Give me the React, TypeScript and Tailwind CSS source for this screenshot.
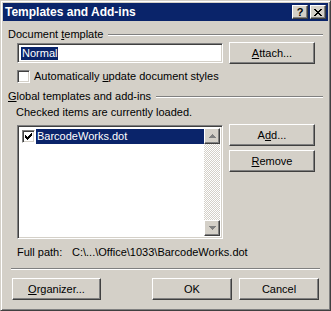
import React from 'react';

const raised =
  'border border-t-white border-l-white border-r-[#404040] border-b-[#404040] shadow-[inset_-1px_-1px_#808080]';
const sunken =
  'border border-t-[#808080] border-l-[#808080] border-r-white border-b-white shadow-[inset_1px_1px_#404040,inset_-1px_-1px_#d4d0c8]';

const Button: React.FC<{ className?: string; children: React.ReactNode }> = ({ className = '', children }) => (
  <div className={`${raised} bg-[#d4d0c8] flex items-center justify-center text-black ${className}`}>{children}</div>
);

const Check: React.FC<{ checked?: boolean }> = ({ checked }) => (
  <div className={`${sunken} w-[13px] h-[13px] bg-white flex items-center justify-center shrink-0`}>
    {checked && (
      <svg width="7" height="7" viewBox="0 0 7 7">
        <path d="M0 2h1v1h1v1h1V3h1V2h1V1h1V0h1v3H6v1H5v1H4v1H3v1H2V6H1V5H0z" fill="#000" />
      </svg>
    )}
  </div>
);

const GroupLabel: React.FC<{ children: React.ReactNode }> = ({ children }) => (
  <div className="flex items-center gap-[5px] h-[13px]">
    <span className="whitespace-nowrap">{children}</span>
    <div className="flex-1 border-t border-t-[#808080] border-b border-b-white" />
  </div>
);

const ScrollArrow: React.FC<{ down?: boolean }> = ({ down }) => (
  <div className={`${raised} w-[16px] h-[16px] bg-[#d4d0c8] flex items-center justify-center`}>
    <svg width="7" height="4" viewBox="0 0 7 4" className={down ? 'rotate-180' : ''}>
      <path d="M3 0h1v1h1v1h1v1h1v1H0V3h1V2h1V1h1z" fill="#808080" />
    </svg>
  </div>
);

export default function App() {
  return (
    <div className="w-[331px] h-[311px] bg-[#d4d0c8] font-['Liberation_Sans',Arial,sans-serif] text-[11px] text-black leading-[13px]">
      <div className="w-full h-full border border-t-[#d4d0c8] border-l-[#d4d0c8] border-r-[#404040] border-b-[#404040] shadow-[inset_1px_1px_white,inset_-1px_-1px_#808080] p-[2px] flex flex-col">
        {/* title bar */}
        <div className="h-[18px] bg-[#0a246a] flex items-center pl-[2px] pr-[2px]">
          <span className="text-white font-bold text-[12px] flex-1">Templates and Add-ins</span>
          <Button className="w-[16px] h-[14px] font-bold text-[11px] leading-none">?</Button>
          <Button className="w-[16px] h-[14px] ml-[2px]">
            <svg width="8" height="7" viewBox="0 0 8 7">
              <path d="M0 0h2v1h1v1h2V1h1V0h2v1H7v1H6v1H5v1h1v1h1v1h1v1H6V6H5V5H3v1H2v1H0V6h1V5h1V4h1V3H2V2H1V1H0z" fill="#000" />
            </svg>
          </Button>
        </div>

        <div className="flex flex-col px-[5px] pt-[7px]">
          <GroupLabel>
            Document <span className="underline">t</span>emplate
          </GroupLabel>

          <div className="flex items-start mt-[2px] pl-[9px] pr-[5px]">
            <div className={`${sunken} w-[206px] h-[20px] bg-white flex items-center pl-[3px]`}>
              <span className="bg-[#0a246a] text-white px-[1px]">Normal</span>
            </div>
            <Button className="w-[86px] h-[22px] ml-[6px] -mt-[1px]">
              <span><span className="underline">A</span>ttach...</span>
            </Button>
          </div>

          <div className="flex items-center mt-[6px] pl-[9px] gap-[4px]">
            <Check />
            <span>Automatically <span className="underline">u</span>pdate document styles</span>
          </div>

          <div className="mt-[7px]">
            <GroupLabel>
              <span className="underline">G</span>lobal templates and add-ins
            </GroupLabel>
          </div>

          <div className="mt-[3px] pl-[8px]">Checked items are currently loaded.</div>

          <div className="flex items-start mt-[6px] pl-[9px] pr-[5px]">
            <div className={`${sunken} w-[206px] h-[114px] bg-white p-[2px] flex`}>
              <div className="flex-1 flex flex-col">
                <div className="flex items-center h-[16px] pl-[2px]">
                  <Check checked />
                  <span className="flex-1 bg-[#0a246a] text-white ml-[1px] pl-[1px] h-[15px] flex items-center">BarcodeWorks.dot</span>
                </div>
              </div>
              <div className="w-[16px] flex flex-col justify-between bg-[repeating-conic-gradient(#d4d0c8_0%_25%,#ffffff_0%_50%)] bg-[length:2px_2px]">
                <ScrollArrow />
                <ScrollArrow down />
              </div>
            </div>
            <div className="flex flex-col ml-[6px] -mt-[1px] gap-[4px]">
              <Button className="w-[86px] h-[22px]">
                <span>A<span className="underline">d</span>d...</span>
              </Button>
              <Button className="w-[86px] h-[22px]">
                <span><span className="underline">R</span>emove</span>
              </Button>
            </div>
          </div>

          <div className="flex mt-[7px] pl-[9px]">
            <span className="w-[55px]">Full path:</span>
            <span>C:\...\Office\1033\BarcodeWorks.dot</span>
          </div>

          <div className="mt-[9px] mx-[3px] border-t border-t-[#808080] border-b border-b-white" />

          <div className="flex mt-[8px] px-[4px]">
            <Button className="w-[89px] h-[22px]">
              <span><span className="underline">O</span>rganizer...</span>
            </Button>
            <div className="flex-1" />
            <Button className="w-[80px] h-[22px]">OK</Button>
            <Button className="w-[80px] h-[22px] ml-[7px]">Cancel</Button>
          </div>
        </div>
      </div>
    </div>
  );
}
